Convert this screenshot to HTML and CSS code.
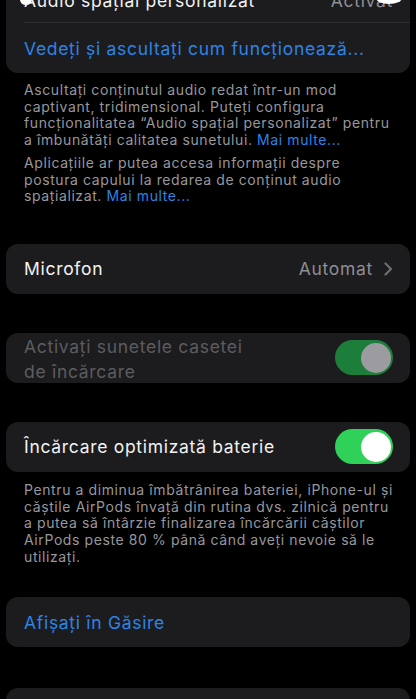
FILE: index.html
```html
<!DOCTYPE html>
<html lang="ro">
<head>
    <meta charset="utf-8">
    <title>AirPods</title>
    <link rel="stylesheet" href="styles.css">
</head>
<body>
    <div class="page">
        <div class="group first">
            <div class="row">
                <span class="blob left"></span>
                <span class="label">Audio spațial personalizat</span>
                <span class="value">Activat</span>
                <span class="blob"></span>
            </div>
            <div class="sep"></div>
            <div class="row tall">
                <span class="link">Vedeți și ascultați cum funcționează...</span>
            </div>
        </div>
        <div class="note first-note">
            <p>Ascultați conținutul audio redat într-un mod<br>captivant, tridimensional. Puteți configura<br>funcționalitatea “Audio spațial personalizat” pentru<br>a îmbunătăți calitatea sunetului. <span class="more">Mai multe...</span></p>
            <p>Aplicațiile ar putea accesa informații despre<br>postura capului la redarea de conținut audio<br>spațializat. <span class="more">Mai multe...</span></p>
        </div>

        <div class="group">
            <div class="row tall">
                <span class="label">Microfon</span>
                <span class="value">Automat</span>
                <svg class="chev" width="9" height="14" viewBox="0 0 9 14"><path d="M1.5 1.5 L7 7 L1.5 12.5" fill="none" stroke="#6e6e73" stroke-width="2.2" stroke-linecap="round" stroke-linejoin="round"/></svg>
            </div>
        </div>

        <div class="group">
            <div class="row tall">
                <span class="label dim two">Activați sunetele casetei<br>de încărcare</span>
                <span class="switch off-look"><span class="knob"></span></span>
            </div>
        </div>

        <div class="group">
            <div class="row tall">
                <span class="label">Încărcare optimizată baterie</span>
                <span class="switch"><span class="knob"></span></span>
            </div>
        </div>
        <div class="note">
            <p>Pentru a diminua îmbătrânirea bateriei, iPhone-ul și<br>căștile AirPods învață din rutina dvs. zilnică pentru<br>a putea să întârzie finalizarea încărcării căștilor<br>AirPods peste 80 % până când aveți nevoie să le<br>utilizați.</p>
        </div>

        <div class="group find">
            <div class="row tall">
                <span class="link">Afișați în Găsire</span>
            </div>
        </div>

        <div class="group last">
            <div class="row tall"></div>
        </div>
    </div>
</body>
</html>
```

FILE: styles.css
```css
body{
    margin: 0;
    background-color: #000;
    font-family: 'Inter', 'Roboto', sans-serif;
    overflow: hidden;
    height: 699px;
}
.page{
    padding: 0 6px;
    display: flex;
    flex-direction: column;
}
.group{
    background-color: #1c1c1e;
    border-radius: 12px;
    margin-top: 39px;
    flex-shrink: 0;
}
.group.first{
    margin-top: -22px;
}
.group.find{
    margin-top: 32px;
}
.group.last{
    margin-top: 41px;
}
.row{
    display: flex;
    align-items: center;
    height: 44px;
    padding: 0 17px 0 18px;
    position: relative;
}
.row.tall{
    height: 50px;
}
.sep{
    height: 1px;
    margin-left: 18px;
    background-color: #2f2f31;
}
.label{
    color: #f2f2f2;
    font-size: 17.5px;
    letter-spacing: 0.7px;
    flex: 1;
    white-space: nowrap;
}
.label.dim{
    color: #5c5c60;
}
.label.two{
    line-height: 25px;
    margin-top: 2px;
}
.value{
    color: #8e8e93;
    font-size: 17.5px;
    letter-spacing: 0.7px;
}
.chev{
    margin-left: 11px;
}
.blob{
    position: absolute;
    right: 8px;
    top: 14px;
    width: 26px;
    height: 12px;
    border-radius: 50%;
    background-color: #fff;
}
.blob.left{
    right: auto;
    left: 14px;
    top: 16px;
    width: 12px;
    height: 11px;
}
.link{
    color: #2c84e6;
    font-size: 17.5px;
    letter-spacing: 0.7px;
    white-space: nowrap;
}
.note{
    padding: 10px 18px 0 18px;
    color: #97979c;
    font-size: 14px;
    letter-spacing: 0.6px;
    line-height: 16.7px;
    white-space: nowrap;
}
.note p{
    margin: 0 0 6px 0;
}
.note p:last-child{
    margin-bottom: 0;
}
.note.first-note{
    padding-top: 9px;
}
.more{
    color: #2c84e6;
}
.switch{
    width: 58px;
    height: 35px;
    border-radius: 18px;
    background-color: #2fd158;
    position: relative;
    flex-shrink: 0;
}
.switch .knob{
    position: absolute;
    right: 2px;
    top: 2.5px;
    width: 30px;
    height: 30px;
    border-radius: 50%;
    background-color: #fff;
}
.switch.off-look{
    background-color: #1d7e3c;
}
.switch.off-look .knob{
    background-color: #9c9ca0;
}
```
